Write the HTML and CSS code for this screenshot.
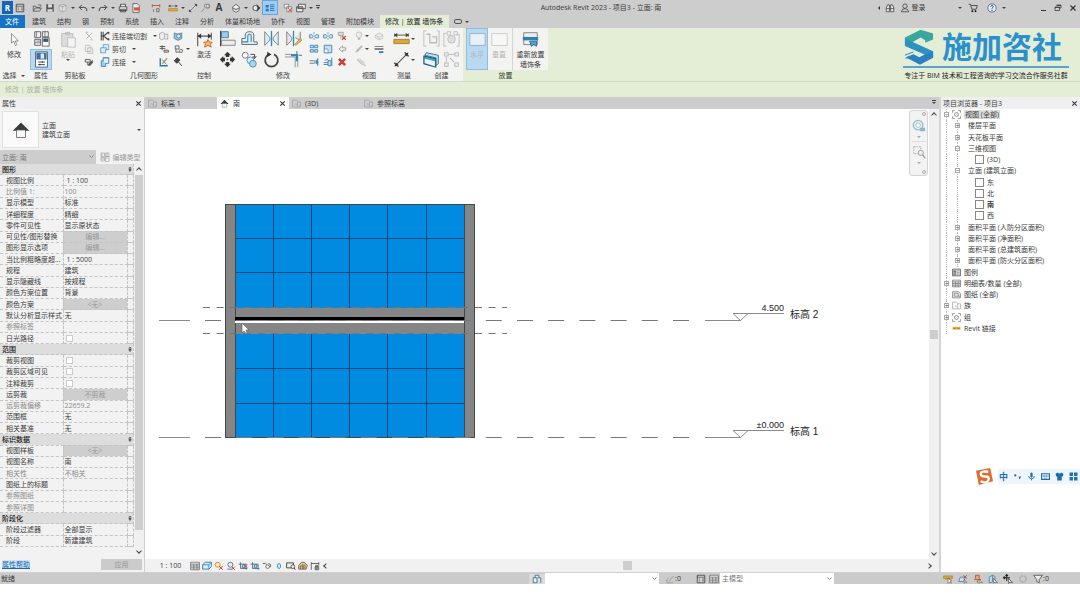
FILE: index.html
```html
<!DOCTYPE html>
<html lang="zh-CN">
<head>
<meta charset="utf-8">
<title>Autodesk Revit 2023 - 项目3 - 立面: 南</title>
<link rel="stylesheet" href="styles.css">
</head>
<body>
<svg class="sprite" aria-hidden="true">
  <symbol id="panel" viewBox="0 0 16 16"><path d="M2 2h12v12H2zM2 5h12M4 8h3M9 8h4M4 11h3M9 11h4" fill="#eee" stroke="#444" stroke-width="1.4"/></symbol>
  <symbol id="open" viewBox="0 0 16 16"><path d="M2 13V5h4l1 2h5v2M2 13l3-5h10l-3 5zM10 3h4v3" fill="none" stroke="#555" stroke-width="1.3"/></symbol>
  <symbol id="save" viewBox="0 0 16 16"><path d="M2 2h12v12H2z" fill="#555"/><path d="M5 2h6v5H5zM4 10h8v4H4z" fill="#ddd"/></symbol>
  <symbol id="sync" viewBox="0 0 16 16"><path d="M2 4l6-2 5 2v8l-6 2-5-2zM2 4l5 2 6-2M7 6v8" fill="#ddd" stroke="#999"/></symbol>
  <symbol id="undo" viewBox="0 0 16 16"><path d="M6 3L2 7l4 4M2 7h8q4 0 4 4v2" fill="none" stroke="#444" stroke-width="1.6"/></symbol>
  <symbol id="redo" viewBox="0 0 16 16"><path d="M10 3l4 4-4 4M14 7H6q-4 0-4 4v2" fill="none" stroke="#444" stroke-width="1.6"/></symbol>
  <symbol id="print" viewBox="0 0 16 16"><path d="M4 6V2h8v4M2 6h12v6H2zM4 10h8v4H4z" fill="#eee" stroke="#444" stroke-width="1.4"/></symbol>
  <symbol id="pdf" viewBox="0 0 16 16"><path d="M3 1h7l3 3v11H3z" fill="#eee" stroke="#555" stroke-width="1.3"/><path d="M5 7h9v5H5z" fill="#d9543f"/></symbol>
  <symbol id="dimred" viewBox="0 0 16 16"><path d="M2 2v5M14 2v5M2 4h12" stroke="#c65a45" fill="none" stroke-width="1.6"/><path d="M4 10v4M9 9v5h4V9z" stroke="#666" fill="none" stroke-width="1.3"/></symbol>
  <symbol id="measure" viewBox="0 0 20 16"><path d="M2 4h16M2 2v4M18 2v4M5 2L2 4l3 2M15 2l3 2-3 2" stroke="#444" fill="#444"/><path d="M1 9h18v5H1z" fill="#dca73c" stroke="#a87820"/></symbol>
  <symbol id="dimline" viewBox="0 0 16 16"><path d="M3 13L13 3M1 11l4 4M11 1l4 4" stroke="#555" stroke-width="1"/><path d="M1.500 14.500l1-4 3 3zM14.500 1.500l-1 4-3-3z" fill="#333"/></symbol>
  <symbol id="tag" viewBox="0 0 16 16"><path d="M1 14l4-5M6 2h7v6H8L5 6z" fill="#ddd" stroke="#777" stroke-width="1.2"/><circle cx="11" cy="5" r="3" fill="none" stroke="#777"/></symbol>
  <symbol id="home3d" viewBox="0 0 16 16"><path d="M2 7l6-5 6 5-6 4zM3 8v4l5 3 5-3V8" fill="#eee" stroke="#555" stroke-width="1.3"/></symbol>
  <symbol id="section" viewBox="0 0 16 16"><path d="M9 2l6 6-6 6z" fill="#333"/><circle cx="7" cy="8" r="4" fill="#eee" stroke="#444" stroke-width="1.4"/></symbol>
  <symbol id="lines" viewBox="0 0 16 16"><path d="M1 3h5v4H1zM1 9h5v4H1z" fill="#2b75b9"/><path d="M8 3h7M8 6h7M8 9h7M8 12h7" stroke="#2b75b9" stroke-width="1.5"/></symbol>
  <symbol id="closewin" viewBox="0 0 16 16"><path d="M2 2h7v6H2zM6 6h8v8H6z" fill="#eee" stroke="#666"/><path d="M8 8l6 6M14 8l-6 6" stroke="#d14c3c" stroke-width="1.6"/></symbol>
  <symbol id="switchwin" viewBox="0 0 16 16"><path d="M4 2h11v7H4zM1 6h10v8H1zM1 8h10" fill="#eee" stroke="#444" stroke-width="1.3"/></symbol>
  <symbol id="binoc" viewBox="0 0 16 16"><path d="M2 14V8l2-5h3v11zM9 14V3h3l2 5v6zM2 9h5M9 9h5" fill="#eee" stroke="#444" stroke-width="1.3"/></symbol>
  <symbol id="user" viewBox="0 0 16 16"><circle cx="8" cy="5" r="3.5" fill="none" stroke="#444" stroke-width="1.3"/><path d="M2 14q1-5 6-5t6 5z" fill="none" stroke="#444" stroke-width="1.3"/></symbol>
  <symbol id="cart" viewBox="0 0 16 16"><path d="M1 2h3l2 8h7l2-6H5" fill="none" stroke="#444" stroke-width="1.4"/><circle cx="7" cy="13" r="1.5"/><circle cx="12" cy="13" r="1.5"/></symbol>
  <symbol id="help" viewBox="0 0 16 16"><circle cx="8" cy="8" r="6.5" fill="#eaf2fa" stroke="#456" stroke-width="1.2"/><path d="M6 6q0-2 2-2t2 2q0 1-2 2v2M8 11v2" fill="none" stroke="#245a9a" stroke-width="1.5"/></symbol>
  <symbol id="restore" viewBox="0 0 16 16"><path d="M5 2h9v6h-3M2 6h9v7H2zM2 7h9M5 3h9" fill="none" stroke="#333" stroke-width="1.5"/></symbol>
  <symbol id="x" viewBox="0 0 16 16"><path d="M3 3l10 10M13 3L3 13" stroke="#333" stroke-width="2.4"/></symbol>
  <symbol id="cursor" viewBox="0 0 12 18"><path d="M2 1v13l3-3 2 6 2-1-2-5h4z" fill="#fff" stroke="#777"/></symbol>
  <symbol id="props" viewBox="0 0 20 20"><path d="M2 2h7v7H2zM11 2h7v6h-7zM2 11h7v7H2z" fill="#eee" stroke="#555"/><path d="M4 2v7M14 2v6M4 13h5M2 15h7" stroke="#777"/><path d="M11 9h8v10h-8z" fill="#fff" stroke="#555"/><path d="M12 10h6v4h-6z" fill="#345b80"/></symbol>
  <symbol id="sheet" viewBox="0 0 20 20"><path d="M3 1h14v18H3z" fill="#fff" stroke="#456"/><path d="M4 2h12v8H4z" fill="#416f9c"/><path d="M9 3h4v6H9z" fill="#dce9f5"/><path d="M6 13h8M11 12v2M6 16h8M8 15v2" stroke="#234" fill="none"/></symbol>
  <symbol id="paste" viewBox="0 0 20 20"><path d="M2 3h13v15H2z" fill="#ddd" stroke="#bbb"/><path d="M6 1h6v4H6z" fill="#c4c4c4"/><path d="M9 8h9v11H9z" fill="#f4f4f4" stroke="#bbb"/></symbol>
  <symbol id="cut" viewBox="0 0 16 16"><path d="M3 3l9 9M13 3l-9 9M3 2h4M10 14h4" stroke="#bbb" stroke-width="1.6"/></symbol>
  <symbol id="copyg" viewBox="0 0 16 16"><path d="M2 2h7l2 2v8H2zM6 6h6l2 2v7H6z" fill="#eee" stroke="#bbb" stroke-width="1.3"/></symbol>
  <symbol id="brush" viewBox="0 0 16 16"><path d="M2 4h8v4H2zM6 8v5h4l4-8" fill="none" stroke="#555" stroke-width="1.4"/><path d="M6 12l6-6 3 2-5 6z" fill="#555"/></symbol>
  <symbol id="cope" viewBox="0 0 16 16"><path d="M2 1v14M5 1v14M2 8h3M6 8l7-6M6 8l7 6M14 1v4M14 11v4" stroke="#444" stroke-width="1.7"/></symbol>
  <symbol id="cutgeo" viewBox="0 0 16 16"><path d="M5 1h9v8H9v5H1V6h4z" fill="#d9edfa" stroke="#397fab"/><path d="M5 6h5v4" fill="none" stroke="#397fab"/></symbol>
  <symbol id="joingeo" viewBox="0 0 16 16"><path d="M5 1h9v9h-5v5H2V6h3z" fill="#9fcdec" stroke="#276d9f" stroke-width="1.2"/><path d="M6 3h7v6H7z" fill="#e5f3fb"/></symbol>
  <symbol id="shape" viewBox="0 0 16 16"><path d="M1 4l5-2 3 2v8l-5 2-3-2zM9 5h5v8h-4" fill="#eee" stroke="#888"/></symbol>
  <symbol id="cubeb" viewBox="0 0 16 16"><path d="M2 3l6 2 6-2v9l-6 3-6-3z" fill="#8fc4e4" stroke="#35627c"/><circle cx="9" cy="8" r="3" fill="#e8f3f9" stroke="#35627c"/></symbol>
  <symbol id="beam" viewBox="0 0 16 16"><path d="M1 4h9M1 7h9M5 2v8M8 10h7v3H8z" fill="none" stroke="#555" stroke-width="1.5"/></symbol>
  <symbol id="wall" viewBox="0 0 16 16"><path d="M2 3h6v5H2zM3 8v5h10V9h-3" fill="#eee" stroke="#555" stroke-width="1.3"/><circle cx="11" cy="11" r="2.5" fill="#eee" stroke="#555"/></symbol>
  <symbol id="paint" viewBox="0 0 16 16"><path d="M2 2v12h12" fill="none" stroke="#2b75a9" stroke-width="2.2"/><path d="M5 11l8-9" stroke="#c79c3d" stroke-width="2.4"/><path d="M5 4l7 8" stroke="#4587b5" stroke-width="1.5"/></symbol>
  <symbol id="hammer" viewBox="0 0 16 16"><path d="M2 6l5-5 4 4-5 5zM8 7l6 7" fill="#444" stroke="#444" stroke-width="1.6"/></symbol>
  <symbol id="activate" viewBox="0 0 20 20"><path d="M2 2v16M18 2v8M2 6h16" stroke="#555" fill="none" stroke-width="1.3"/><path d="M2 6l4-3v6zM18 6l-4-3v6z" fill="#333"/><path d="M14 10l2 3 3 0-2 3 1 3-4-2-4 2 1-4-2-2h4z" fill="#f4b370" stroke="#bf6425"/></symbol>
  <symbol id="align" viewBox="0 0 20 20"><path d="M2 1v18" stroke="#333" stroke-width="1.4"/><path d="M3 2h8v7H3z" fill="#9bcdec" stroke="#39739a"/><path d="M3 12h16v6H3z" fill="#eee" stroke="#777"/></symbol>
  <symbol id="offset" viewBox="0 0 20 20"><path d="M1 17h18v-3h-4V6q0-4-5-4T5 6v4H1z" fill="#e3f1fa" stroke="#555"/><path d="M1 14h7V7q0-2 2-2t2 2v7" fill="none" stroke="#3688b9" stroke-width="1.3"/></symbol>
  <symbol id="mirror" viewBox="0 0 20 20"><path d="M2 2v16l6-6V9zM18 2v16l-6-6V9z" fill="#dceef7" stroke="#777"/><path d="M10 1v18" stroke="#368ac0" stroke-width="1.6"/></symbol>
  <symbol id="mirrorp" viewBox="0 0 20 20"><path d="M2 2v16l6-6V9zM18 2v10l-6-3" fill="#e4e4e4" stroke="#777"/><path d="M10 1v18" stroke="#368ac0" stroke-width="1.6"/><path d="M11 17l7-7 2 2-7 6z" fill="#e4b14b" stroke="#9a742b" stroke-width=".6"/></symbol>
  <symbol id="move" viewBox="0 0 20 20"><path d="M10 1l4 4h-2v3H8V5H6zM10 19l4-4h-2v-3H8v3H6zM1 10l4-4v2h3v4H5v2zM19 10l-4-4v2h-3v4h3v2z" fill="#333"/><path d="M7 7h6v6H7z" fill="#f3f3f2"/><path d="M9 9h2v2H9z" fill="#555"/></symbol>
  <symbol id="copy" viewBox="0 0 20 20"><circle cx="5" cy="5" r="3.5" fill="#fff" stroke="#666"/><circle cx="11" cy="11" r="4" fill="#dceef9" stroke="#4886ac"/><circle cx="14" cy="15" r="4" fill="#a9d6ef" stroke="#4886ac"/><path d="M11 4h5v4M14 6l2 3 2-3" fill="none" stroke="#333"/></symbol>
  <symbol id="rotate" viewBox="0 0 20 20"><path d="M13 4a7.500 7.500 0 1 1-6 0" fill="none" stroke="#444" stroke-width="2"/><path d="M5 1l5 3-5 3z" fill="#333"/></symbol>
  <symbol id="trim" viewBox="0 0 20 20"><path d="M0 7h12v12M0 4h15v15" fill="none" stroke="#888"/><path d="M7 5h7v7" fill="none" stroke="#2887c1" stroke-width="2.5"/><path d="M14 0v4M16 5h4" stroke="#555"/></symbol>
  <symbol id="split" viewBox="0 0 16 16"><path d="M1 6h4l2 2-2 3H1zM15 6h-4L9 8l2 3h4z" fill="#dceefa" stroke="#3a7ba8" stroke-width="1.3"/><path d="M8 2v3M8 11v3" stroke="#3a8bc0" stroke-width="1.3"/></symbol>
  <symbol id="array" viewBox="0 0 16 16"><path d="M2 2h5v4H2zM9 2h5v4H9zM2 9h5v4H2zM9 9h5v4H9z" fill="#b8dcf1" stroke="#3a82b2" stroke-width="1.3"/></symbol>
  <symbol id="scale" viewBox="0 0 16 16"><path d="M2 2h12v12H2z" fill="#c6e3f5" stroke="#3a82b2" stroke-width="1.4"/><path d="M2 8h6v6H2z" fill="#fff" stroke="#3a82b2"/></symbol>
  <symbol id="pin" viewBox="0 0 16 16"><path d="M2 2h8v5H2zM6 8v5" fill="#ddd" stroke="#888"/><path d="M8 8l6 6M14 8l-6 6" stroke="#c5463d" stroke-width="1.7"/></symbol>
  <symbol id="unpin" viewBox="0 0 16 16"><path d="M14 6h-5V3L3 8l6 5v-3h5z" fill="#eee" stroke="#999" stroke-width="1.3"/></symbol>
  <symbol id="trims" viewBox="0 0 16 16"><path d="M1 6h8M1 10h8" stroke="#666" stroke-width="1.3"/><path d="M8 8h6M11 5l3 3-3 3M14 2v12" fill="none" stroke="#3185ba" stroke-width="1.7"/></symbol>
  <symbol id="trimm" viewBox="0 0 16 16"><path d="M1 9h7M1 12h7" stroke="#666" stroke-width="1.3"/><path d="M8 6h5v8H8zM14 1v13M3 6l3-3 3 3" fill="#cbe5f5" stroke="#3185ba" stroke-width="1.5"/></symbol>
  <symbol id="del" viewBox="0 0 16 16"><path d="M3 3l10 10M13 3L3 13" stroke="#c94137" stroke-width="4"/></symbol>
  <symbol id="bulb" viewBox="0 0 16 16"><circle cx="8" cy="6" r="4.500" fill="#eee" stroke="#bbb" stroke-width="1.3"/><path d="M6 11h4v3H6z" fill="#bbb"/></symbol>
  <symbol id="layers" viewBox="0 0 16 16"><path d="M2 7l6-4 6 3v6l-6 2-6-3zM2 7l6 3 6-4M8 10v4" fill="#e8e8e8" stroke="#bbb"/></symbol>
  <symbol id="linework" viewBox="0 0 16 16"><path d="M1 3l9 6 4 5-6-2-7-6zM1 6l7 5M4 3l8 6" fill="#ddd" stroke="#bbb"/></symbol>
  <symbol id="pen" viewBox="0 0 16 16"><path d="M2 14l2-5 8-7 2 2-7 8z" fill="#bbb"/></symbol>
  <symbol id="lw" viewBox="0 0 16 16"><path d="M1 4h14" stroke="#444"/><path d="M1 8h14" stroke="#444" stroke-width="2"/><path d="M8 13h7" stroke="#2d81b7" stroke-width="3"/></symbol>
  <symbol id="group" viewBox="0 0 20 20"><path d="M4 1H1v18h3M16 1h3v18h-3" fill="none" stroke="#bbb"/><path d="M4 5h4v10h8V8h-5" fill="none" stroke="#bbb" stroke-width="1.5"/></symbol>
  <symbol id="groupc" viewBox="0 0 20 20"><path d="M4 4H1v15h3M16 5h3v14h-3" fill="none" stroke="#bbb"/><circle cx="10" cy="11" r="4.500" fill="#ddd" stroke="#bbb"/><path d="M5 2h4v4H5zM13 2h4v4h-4z" fill="none" stroke="#bbb"/></symbol>
  <symbol id="assembly" viewBox="0 0 20 20"><path d="M4 2l14 3v10l-3 2V8L2 5z" fill="#bfe0f2" stroke="#286686"/><path d="M1 6l14 3v10L1 15z" fill="#4b9fcb" stroke="#1f566f" stroke-width="1.2"/><path d="M2 9l12 3v6L2 14z" fill="#eaf6fc"/></symbol>
  <symbol id="parts" viewBox="0 0 20 20"><path d="M2 2h4v4H2zM14 2h4v4h-4zM2 14h4v4H2zM14 14h4v4h-4zM7 4h6M4 7v6M8 8l5 5" fill="none" stroke="#bbb" stroke-width="1.2"/></symbol>
  <symbol id="rect" viewBox="0 0 20 16"><path d="M1 1h18v14H1z" fill="#e9f1f8" stroke="#8eabc5"/></symbol>
  <symbol id="rectg" viewBox="0 0 20 16"><path d="M1 1h18v14H1z" fill="#f8f8f8" stroke="#c6c6c6"/></symbol>
  <symbol id="sweep" viewBox="0 0 20 18"><path d="M2 1h16v14H2z" fill="#eee" stroke="#777"/><path d="M1 6h18v4H1z" fill="#327fb0"/><path d="M9 11h8v6l-3-2-3 2z" fill="#4da5d8" stroke="#25658d"/></symbol>
  <symbol id="home" viewBox="0 0 24 24"><path d="M1 13L12 2l11 11z" fill="#343c42"/><path d="M6 12h12v10H6z" fill="#f7f7f7" stroke="#555"/></symbol>
  <symbol id="plan" viewBox="0 0 16 16"><path d="M1 2h7l2 2v4M1 2v12h14V5h-5M5 9h5v5" fill="none" stroke="#999" stroke-width="1.2"/></symbol>
  <symbol id="edit" viewBox="0 0 20 20"><path d="M2 2h7v7H2zM11 2h7v7h-7zM2 11h7v7H2zM11 9h7v10h-7zM4 2v7M14 2v12M2 14h7" fill="none" stroke="#999" stroke-width="1.2"/></symbol>
  <symbol id="views" viewBox="0 0 16 16"><path d="M1 5V1h4M11 1h4v4M15 11v4h-4M5 15H1v-4" fill="none" stroke="#777" stroke-width="1.3"/><circle cx="8" cy="8" r="3.500" fill="#eee" stroke="#777" stroke-width="1.3"/></symbol>
  <symbol id="legend" viewBox="0 0 16 16"><path d="M1 2h14v12H1z" fill="#ddd" stroke="#555" stroke-width="1.4"/><path d="M3 5h4v3H3zM3 10h4v2H3zM9 5h4M9 8h4M9 11h4" fill="#777" stroke="#777"/></symbol>
  <symbol id="sched" viewBox="0 0 16 16"><path d="M1 2h14v12H1zM1 5h14M1 8h14M1 11h14M6 5v9M11 5v9" fill="#f4f4f4" stroke="#666" stroke-width="1.2"/></symbol>
  <symbol id="sheets" viewBox="0 0 16 16"><path d="M1 3h11l3 3v8H1zM4 6h7v5H4zM11 11h4" fill="#eee" stroke="#777" stroke-width="1.3"/></symbol>
  <symbol id="link" viewBox="0 0 16 16"><path d="M1 5h14v5H1z" fill="#e0ac37"/><path d="M3 8h3M10 8h3" stroke="#8a6d20" stroke-width="1.4"/></symbol>
  <symbol id="cube" viewBox="0 0 16 16"><path d="M1 6l4-4h10v7l-4 4H1z" fill="#d8edf8" stroke="#3580ae" stroke-width="1.5"/><path d="M1 6h10v7M11 6l4-4" fill="none" stroke="#3580ae" stroke-width="1.3"/></symbol>
  <symbol id="sun" viewBox="0 0 16 16"><circle cx="6" cy="6" r="4" fill="#fbe7bd" stroke="#d1902b" stroke-width="1.5"/><path d="M8 8l6 6M14 8l-6 6" stroke="#bd4936" stroke-width="1.6"/></symbol>
  <symbol id="shadow" viewBox="0 0 16 16"><circle cx="7" cy="6" r="4" fill="#eee" stroke="#557b94" stroke-width="1.5"/><path d="M2 13h8" stroke="#557b94" stroke-width="1.5"/><path d="M9 9l5 5M14 9l-5 5" stroke="#bd4936" stroke-width="1.5"/></symbol>
  <symbol id="crop" viewBox="0 0 16 16"><path d="M1 5h12v9M4 2v10h11M7 6h4v5H7z" fill="#bcdcf0" stroke="#466c88" stroke-width="1.3"/></symbol>
  <symbol id="cropx" viewBox="0 0 16 16"><path d="M1 5h12v9M4 2v10h11M7 6h4v5H7z" fill="#bcdcf0" stroke="#466c88" stroke-width="1.3"/><path d="M9 5l6 6M15 5l-6 6" stroke="#bd4936" stroke-width="1.4"/></symbol>
  <symbol id="glasses" viewBox="0 0 16 16"><path d="M1 4q5-2 8 3M6 9h8q1-5-4-5" fill="none" stroke="#666" stroke-width="1.5"/><circle cx="9" cy="9" r="3" fill="#eee" stroke="#666" stroke-width="1.2"/></symbol>
  <symbol id="reveal" viewBox="0 0 16 16"><ellipse cx="8" cy="8" rx="2.500" ry="4" fill="#e2f2fb" stroke="#378bbd" stroke-width="1.5"/></symbol>
  <symbol id="temp" viewBox="0 0 16 16"><path d="M1 3h11v8H1z" fill="#eee" stroke="#444" stroke-width="1.5"/><circle cx="11" cy="9" r="3" fill="#eee" stroke="#444" stroke-width="1.3"/><path d="M13 11l2 3" stroke="#444" stroke-width="1.5"/></symbol>
  <symbol id="displace" viewBox="0 0 16 16"><path d="M1 13V7l5-5h4l5 5-2 6z" fill="#d8c397" stroke="#735c3e" stroke-width="1.3"/><path d="M4 13V8h4v5M8 5v8M11 6v6" fill="none" stroke="#735c3e" stroke-width="1.2"/></symbol>
  <symbol id="constr" viewBox="0 0 16 16"><path d="M2 2v12M2 4h12M14 2v5" fill="none" stroke="#555" stroke-width="1.4"/><path d="M8 9h6v5H8zM9 9V7h4v2" fill="#888" stroke="#555"/></symbol>
  <symbol id="funnel" viewBox="0 0 16 16"><path d="M1 2h14L10 9v5l-4-2V9z" fill="#eee" stroke="#555" stroke-width="1.4"/></symbol>
  <symbol id="worksets" viewBox="0 0 16 16"><path d="M2 6h6v8H2zM5 6V2h6v3M9 6h5v8" fill="#e6f3f8" stroke="#38738c" stroke-width="1.4"/></symbol>
  <symbol id="sellink" viewBox="0 0 16 16"><path d="M1 3h14v4H1zM3 8h9" fill="#d8a43c" stroke="#a57b25"/><path d="M8 7v8l2-2 3 2-1-4h2z" fill="#fff" stroke="#555"/></symbol>
  <symbol id="selund" viewBox="0 0 16 16"><path d="M1 12l3-7h8l-3 7z" fill="#cce2f1" stroke="#3f7aa0" stroke-width="1.2"/><path d="M9 2l5 5M14 2L9 7" stroke="#c1473a" stroke-width="1.6"/><path d="M10 8v7l2-2 2 1z" fill="#fff" stroke="#555"/></symbol>
  <symbol id="selpin" viewBox="0 0 16 16"><path d="M4 2h6v5l2 2H2l2-2zM7 9v5" fill="#f0a173" stroke="#b9532b" stroke-width="1.3"/><path d="M10 8v7l2-2 3 1z" fill="#fff" stroke="#555"/></symbol>
  <symbol id="selface" viewBox="0 0 16 16"><path d="M2 5l5-3v11l-5 1zM7 2l4 2v7" fill="#c7e4f4" stroke="#347ba5" stroke-width="1.3"/><path d="M9 7v8l2-2 4 1z" fill="#fff" stroke="#444"/></symbol>
  <symbol id="drag" viewBox="0 0 16 16"><path d="M6 1v10M1 6h10M4 3l2-2 2 2M3 4L1 6l2 2" fill="none" stroke="#222" stroke-width="1.8"/><path d="M9 7v8l2-2 4 1z" fill="#fff" stroke="#222"/></symbol>
  <symbol id="ring" viewBox="0 0 16 16"><circle cx="8" cy="8" r="5" fill="none" stroke="#aaa" stroke-width="2.500" stroke-dasharray="3 1"/></symbol>
  <symbol id="editreq" viewBox="0 0 16 16"><path d="M3 14V9l3-3M3 14h10M6 12l8-9" fill="none" stroke="#999" stroke-width="1.3"/></symbol>
</svg>

<header class="titlebar">
  <nav class="quick" aria-label="快速访问工具栏">
    <button class="app" aria-label="应用菜单">R</button>
    <button aria-label="主页"><svg><use href="#panel"/></svg></button><i class="sep"></i>
    <button aria-label="打开"><svg><use href="#open"/></svg></button>
    <button aria-label="保存"><svg><use href="#save"/></svg></button>
    <button aria-label="同步"><svg><use href="#sync"/></svg></button><b class="caret"></b>
    <button aria-label="放弃"><svg><use href="#undo"/></svg></button><b class="caret"></b>
    <button aria-label="重做"><svg><use href="#redo"/></svg></button><b class="caret"></b>
    <button aria-label="打印"><svg><use href="#print"/></svg></button>
    <button aria-label="导出 PDF"><svg><use href="#pdf"/></svg></button><i class="sep far"></i>
    <button aria-label="关闭非活动"><svg><use href="#dimred"/></svg></button><i class="sep"></i>
    <button aria-label="测量"><svg><use href="#measure"/></svg></button><b class="caret"></b>
    <button aria-label="对齐尺寸标注"><svg><use href="#dimline"/></svg></button>
    <button aria-label="按类别标记"><svg><use href="#tag"/></svg></button>
    <button class="letter" aria-label="文字">A</button><i class="sep"></i>
    <button aria-label="默认三维视图"><svg><use href="#home3d"/></svg></button><b class="caret"></b>
    <button aria-label="剖面"><svg><use href="#section"/></svg></button>
    <button class="on" aria-label="细线"><svg><use href="#lines"/></svg></button><i class="sep"></i>
    <button aria-label="关闭隐藏窗口"><svg><use href="#closewin"/></svg></button>
    <button aria-label="切换窗口"><svg><use href="#switchwin"/></svg></button><b class="caret"></b>
    <b class="caret bar"></b>
  </nav>
  <h1 class="title">Autodesk Revit 2023 - 项目3 - 立面: 南</h1>
  <div class="account">
    <b class="caret side"></b>
    <button aria-label="搜索"><svg><use href="#binoc"/></svg></button>
    <button class="login"><svg><use href="#user"/></svg>登录</button>
    <span class="store"><b class="caret"></b>
    <button aria-label="商店"><svg><use href="#cart"/></svg></button></span>
    <button aria-label="帮助"><svg><use href="#help"/></svg></button><b class="caret"></b>
  </div>
  <div class="winctl">
    <button aria-label="最小化"><i class="min"></i></button>
    <button aria-label="还原"><svg><use href="#restore"/></svg></button>
    <button aria-label="关闭"><svg><use href="#x"/></svg></button>
  </div>
</header>

<nav class="tabs" aria-label="功能区选项卡">
  <button class="file">文件</button>
  <button>建筑</button><button>结构</button><button>钢</button><button>预制</button><button>系统</button><button>插入</button><button>注释</button><button>分析</button><button>体量和场地</button><button>协作</button><button>视图</button><button>管理</button><button>附加模块</button>
  <button class="current">修改 | 放置 墙饰条</button>
  <button class="state" aria-label="面板状态"><i></i><b class="caret"></b></button>
</nav>

<section class="ribbon" aria-label="功能区">
  <div class="group p-select">
    <div class="body"><button class="tool"><svg class="cur"><use href="#cursor"/></svg><span>修改</span></button></div>
    <h2>选择 <b class="caret"></b></h2>
  </div>
  <div class="group p-props">
    <div class="body stack"><button aria-label="类型属性"><svg class="big"><use href="#props"/></svg></button><button class="hot" aria-label="属性"><svg class="big"><use href="#sheet"/></svg></button></div>
    <h2>属性</h2>
  </div>
  <div class="group p-clip">
    <div class="body split">
      <button class="tool dim"><svg class="big"><use href="#paste"/></svg><span>粘贴</span><b class="caret"></b></button>
      <div class="rows"><button aria-label="剪切"><svg><use href="#cut"/></svg></button><button aria-label="复制"><svg><use href="#copyg"/></svg></button><button aria-label="匹配类型"><svg><use href="#brush"/></svg></button></div>
    </div>
    <h2>剪贴板</h2>
  </div>
  <div class="group p-geo">
    <div class="body split">
      <div class="rows named"><button><svg><use href="#cope"/></svg>连接端切割<b class="caret"></b></button><button><svg><use href="#cutgeo"/></svg>剪切<b class="caret"></b></button><button><svg><use href="#joingeo"/></svg>连接<b class="caret"></b></button></div>
      <div class="pairs"><button aria-label="拆分面"><svg><use href="#shape"/></svg></button><button aria-label="填色"><svg><use href="#cubeb"/></svg></button><button aria-label="梁连接"><svg><use href="#beam"/></svg></button><button class="drop" aria-label="墙连接"><svg><use href="#wall"/></svg><b class="caret"></b></button><button aria-label="涂料"><svg><use href="#paint"/></svg></button><button aria-label="拆除"><svg><use href="#hammer"/></svg></button></div>
    </div>
    <h2>几何图形</h2>
  </div>
  <div class="group p-ctl">
    <div class="body"><button class="tool"><svg class="big"><use href="#activate"/></svg><span>激活</span></button></div>
    <h2>控制</h2>
  </div>
  <div class="group p-mod">
    <div class="body split">
      <div class="bigs"><button aria-label="对齐"><svg class="big"><use href="#align"/></svg></button><button aria-label="偏移"><svg class="big"><use href="#offset"/></svg></button><button aria-label="镜像-拾取轴"><svg class="big"><use href="#mirror"/></svg></button><button aria-label="镜像-绘制轴"><svg class="big"><use href="#mirrorp"/></svg></button><button aria-label="移动"><svg class="big"><use href="#move"/></svg></button><button aria-label="复制图元"><svg class="big"><use href="#copy"/></svg></button><button aria-label="旋转"><svg class="big"><use href="#rotate"/></svg></button><button aria-label="修剪"><svg class="big"><use href="#trim"/></svg></button></div>
      <div class="pairs three"><button aria-label="拆分图元"><svg><use href="#split"/></svg></button><button aria-label="用间隙拆分"><svg><use href="#split"/></svg></button><button aria-label="解锁"><svg><use href="#pin"/></svg></button><button aria-label="阵列"><svg><use href="#array"/></svg></button><button aria-label="缩放"><svg><use href="#scale"/></svg></button><button aria-label="锁定"><svg><use href="#unpin"/></svg></button><button aria-label="修剪单个"><svg><use href="#trims"/></svg></button><button aria-label="修剪多个"><svg><use href="#trimm"/></svg></button><button aria-label="删除"><svg><use href="#del"/></svg></button></div>
    </div>
    <h2>修改</h2>
  </div>
  <div class="group p-view">
    <div class="body"><div class="pairs wide"><button aria-label="隐藏"><svg><use href="#bulb"/></svg><b class="caret"></b></button><button aria-label="置换"><svg><use href="#layers"/></svg></button><button aria-label="替换图形"><svg><use href="#pen"/></svg><b class="caret"></b></button><button aria-label="线宽"><svg><use href="#lw"/></svg></button><button aria-label="线处理"><svg><use href="#linework"/></svg></button></div></div>
    <h2>视图</h2>
  </div>
  <div class="group p-meas">
    <div class="body stack"><button aria-label="测量距离"><svg class="big"><use href="#measure"/></svg><b class="caret"></b></button><button aria-label="尺寸标注"><svg class="big"><use href="#dimline"/></svg><b class="caret"></b></button></div>
    <h2>测量</h2>
  </div>
  <div class="group p-make">
    <div class="body"><div class="bigs two"><button aria-label="创建组"><svg class="big"><use href="#group"/></svg></button><button aria-label="创建相似"><svg class="big"><use href="#groupc"/></svg></button><button aria-label="创建部件"><svg class="big"><use href="#assembly"/></svg></button><button aria-label="创建零件"><svg class="big"><use href="#parts"/></svg></button></div></div>
    <h2>创建</h2>
  </div>
  <div class="group p-place">
    <div class="body split">
      <button class="tool hot dim"><svg class="big"><use href="#rect"/></svg><span>水平</span></button>
      <button class="tool dim"><svg class="big"><use href="#rectg"/></svg><span>垂直</span></button>
      <button class="tool last"><svg class="big"><use href="#sweep"/></svg><span>重新放置</span><span>墙饰条</span></button>
    </div>
    <h2>放置</h2>
  </div>
  <aside class="brand">
    <div class="brand-top">
      <svg class="brand-mark" viewBox="0 0 90 110" aria-hidden="true"><path d="M88 14L50 2 2 26v24l24 12V40l24-14 14 8v8l24-10z" fill="#3aa79f"/><path d="M2 28l24 12 62 28v20l-26-10L2 52z" fill="#2b93bd"/><path d="M88 68v20l-40 21L4 86l24-9 18 9 18-9z" fill="#2a80c4"/><path d="M2 80l26-10M4 90l26-10" stroke="#2a80c4" stroke-width="3"/></svg>
      <strong>施加咨社</strong>
    </div>
    <p>专注于 BIM 技术和工程咨询的学习交流合作服务社群</p>
  </aside>
</section>

<div class="options">修改 | 放置 墙饰条</div>

<main class="work">
  <aside class="properties" aria-label="属性">
    <header class="panelhead"><h2>属性</h2><button aria-label="关闭属性"><svg><use href="#x"/></svg></button></header>
    <div class="type"><span class="thumb"><svg><use href="#home"/></svg></span><span class="names">立面<br>建筑立面</span><b class="caret"></b></div>
    <div class="instance"><select aria-label="实例"><option>立面: 南</option></select><button><svg><use href="#edit"/></svg>编辑类型</button></div>
    <div class="tablewrap">
      <table>
        <colgroup><col class="c1"><col class="c2"><col class="c3"></colgroup>
        <tbody>
        <tr class="cat"><th colspan="2">图形</th><td>⇞</td></tr>
        <tr><th>视图比例</th><td class="in">1 : 100</td><td></td></tr>
        <tr class="off"><th>比例值 1:</th><td>100</td><td></td></tr>
        <tr><th>显示模型</th><td>标准</td><td></td></tr>
        <tr><th>详细程度</th><td>精细</td><td></td></tr>
        <tr><th>零件可见性</th><td>显示原状态</td><td></td></tr>
        <tr><th>可见性/图形替换</th><td class="act"><button>编辑...</button></td><td></td></tr>
        <tr><th>图形显示选项</th><td class="act"><button>编辑...</button></td><td></td></tr>
        <tr><th>当比例粗略度超...</th><td class="in">1 : 5000</td><td></td></tr>
        <tr><th>规程</th><td>建筑</td><td></td></tr>
        <tr><th>显示隐藏线</th><td>按规程</td><td></td></tr>
        <tr><th>颜色方案位置</th><td>背景</td><td></td></tr>
        <tr><th>颜色方案</th><td class="act"><button>&lt;无&gt;</button></td><td></td></tr>
        <tr><th>默认分析显示样式</th><td>无</td><td></td></tr>
        <tr class="off"><th>参照标签</th><td></td><td></td></tr>
        <tr><th><label for="sun1">日光路径</label></th><td><input type="checkbox" id="sun1"></td><td></td></tr>
        <tr class="cat"><th colspan="2">范围</th><td>⇞</td></tr>
        <tr><th><label for="crop1">裁剪视图</label></th><td><input type="checkbox" id="crop1"></td><td></td></tr>
        <tr><th><label for="crop2">裁剪区域可见</label></th><td><input type="checkbox" id="crop2"></td><td></td></tr>
        <tr><th><label for="crop3">注释裁剪</label></th><td><input type="checkbox" id="crop3"></td><td></td></tr>
        <tr><th>远剪裁</th><td class="act"><button>不剪裁</button></td><td></td></tr>
        <tr class="off"><th>远剪裁偏移</th><td>22659.2</td><td></td></tr>
        <tr><th>范围框</th><td>无</td><td></td></tr>
        <tr><th>相关基准</th><td>无</td><td></td></tr>
        <tr class="cat"><th colspan="2">标识数据</th><td>⇞</td></tr>
        <tr><th>视图样板</th><td class="act"><button>&lt;无&gt;</button></td><td></td></tr>
        <tr><th>视图名称</th><td>南</td><td></td></tr>
        <tr class="off"><th>相关性</th><td>不相关</td><td></td></tr>
        <tr><th>图纸上的标题</th><td></td><td></td></tr>
        <tr class="off"><th>参照图纸</th><td></td><td></td></tr>
        <tr class="off"><th>参照详图</th><td></td><td></td></tr>
        <tr class="cat"><th colspan="2">阶段化</th><td>⇞</td></tr>
        <tr><th>阶段过滤器</th><td>全部显示</td><td></td></tr>
        <tr><th>阶段</th><td>新建建筑</td><td></td></tr>
        </tbody>
      </table>
      <div class="vscroll"><i class="chev up"></i><span class="bar"></span><i class="chev down"></i></div>
    </div>
    <footer><a href="#help">属性帮助</a><button disabled>应用</button></footer>
  </aside>

  <section class="viewer" aria-label="视图窗口">
    <nav class="doctabs">
      <button><svg><use href="#plan"/></svg><span>标高 1</span></button>
      <button class="current"><svg><use href="#home"/></svg><span>南</span><svg class="close"><use href="#x"/></svg></button>
      <button><svg><use href="#plan"/></svg><span>(3D)</span></button>
      <button><svg><use href="#plan"/></svg><span>参照标高</span></button>
      <b class="caret bar"></b>
    </nav>
    <div class="stage">
      <svg class="drawing" viewBox="145 109 784 450" preserveAspectRatio="xMinYMin meet" role="img" aria-label="南立面">
        <rect x="225" y="204" width="250" height="234" fill="#858585"/>
        <path d="M235 204h229v104H235zM235 334h229v104H235z" fill="#008ae0"/>
        <path d="M273.500 204v104M311.500 204v104M349.500 204v104M387.500 204v104M426.500 204v104M273.500 334v104M311.500 334v104M349.500 334v104M387.500 334v104M426.500 334v104M235 238.500h229M235 272.500h229M235 368.500h229M235 403.500h229" stroke="#0c477b"/>
        <path d="M225.500 204.500h249v233h-249zM235.500 204v234M464.500 204v234" fill="none" stroke="#3f484d"/>
        <rect x="235" y="321" width="229" height="2" fill="#fff"/><rect x="235" y="317" width="229" height="3" fill="#000"/>
        <path d="M203 307.500h304M203 333.500h304" stroke="#6c7878" stroke-dasharray="7 6.600"/>
        <path d="M159 320.500h31M159 437.500h31M705 320.500h36M705 437.500h36M733 313.500h51M733 313.500l7.500 7 7.500-7M733 430.500h51M733 430.500l7.500 7 7.500-7" fill="none" stroke="#8b8b8b"/>
        <path d="M205 320.500h496M205 437.500h496" stroke="#777" stroke-dasharray="16 15.200"/>
        <g class="leveltext"><text x="784" y="311" text-anchor="end">4.500</text><text x="784" y="428" text-anchor="end">±0.000</text><text class="name" x="790" y="318">标高 2</text><text class="name" x="790" y="435">标高 1</text></g>
        <path d="M242 323v10l2-2 2 3 1-1-1-3h3z" fill="#fff" stroke="#555" stroke-width=".6"/>
      </svg>
      <div class="navbar">
        <i class="dot"></i>
        <button aria-label="控制盘"><svg viewBox="0 0 16 16"><circle cx="7" cy="7" r="5.500" fill="#e4eff4" stroke="#9dbccb" stroke-width="1.500"/><circle cx="7" cy="7" r="2.500" fill="#fff" stroke="#9dbccb"/><path d="M9 10h6v4H9z" fill="#8fb6ca"/></svg></button><b class="caret"></b>
        <hr>
        <button aria-label="区域放大"><svg viewBox="0 0 16 16"><path d="M2 2h8v8H2z" fill="none" stroke="#aaa" stroke-dasharray="2 1"/><circle cx="10" cy="9" r="3" fill="#eee" stroke="#999"/><path d="M12 11l3 4" stroke="#999" stroke-width="1.500"/></svg></button><b class="caret"></b>
        <i class="dot end"></i>
      </div>
      <div class="vscroll view"><i class="chev up"></i><span class="bar"></span><i class="chev down"></i></div>
    </div>
    <div class="viewbar">
      <button class="ratio">1 : 100</button>
      <button aria-label="详细程度"><svg><use href="#sched"/></svg></button><button aria-label="视觉样式"><svg><use href="#cube"/></svg></button><button aria-label="日光路径"><svg><use href="#sun"/></svg></button><button aria-label="阴影"><svg><use href="#shadow"/></svg></button><button aria-label="裁剪视图"><svg><use href="#cropx"/></svg></button><button aria-label="显示裁剪区域"><svg><use href="#crop"/></svg></button><button aria-label="临时隐藏"><svg><use href="#glasses"/></svg></button><button aria-label="显示隐藏图元"><svg><use href="#reveal"/></svg></button><button aria-label="临时视图属性"><svg><use href="#temp"/></svg></button><button aria-label="分析模型"><svg><use href="#displace"/></svg></button><button aria-label="显示约束"><svg><use href="#constr"/></svg></button>
      <i class="chev left"></i>
      <div class="hscroll"><span></span></div>
      <i class="chev right"></i>
    </div>
  </section>

  <aside class="browser" aria-label="项目浏览器">
    <header class="panelhead"><h2>项目浏览器 - 项目3</h2><button aria-label="关闭项目浏览器"><svg><use href="#x"/></svg></button></header>
    <ul class="tree">
      <li class="l0"><i class="exp">−</i><svg><use href="#views"/></svg><span class="sel">视图 (全部)</span></li>
      <li class="l1"><i class="exp">+</i><span>楼层平面</span></li>
      <li class="l1"><i class="exp">+</i><span>天花板平面</span></li>
      <li class="l1"><i class="exp">−</i><span>三维视图</span></li>
      <li class="l2"><i class="box"></i><span>(3D)</span></li>
      <li class="l1"><i class="exp">−</i><span>立面 (建筑立面)</span></li>
      <li class="l2"><i class="box"></i><span>东</span></li>
      <li class="l2"><i class="box"></i><span>北</span></li>
      <li class="l2"><i class="box"></i><strong>南</strong></li>
      <li class="l2"><i class="box"></i><span>西</span></li>
      <li class="l1"><i class="exp">+</i><span>面积平面 (人防分区面积)</span></li>
      <li class="l1"><i class="exp">+</i><span>面积平面 (净面积)</span></li>
      <li class="l1"><i class="exp">+</i><span>面积平面 (总建筑面积)</span></li>
      <li class="l1"><i class="exp">+</i><span>面积平面 (防火分区面积)</span></li>
      <li class="l0"><i class="exp none"></i><svg><use href="#legend"/></svg><span>图例</span></li>
      <li class="l0"><i class="exp">+</i><svg><use href="#sched"/></svg><span>明细表/数量 (全部)</span></li>
      <li class="l0"><i class="exp none"></i><svg><use href="#sheets"/></svg><span>图纸 (全部)</span></li>
      <li class="l0"><i class="exp">+</i><svg><use href="#plan"/></svg><span>族</span></li>
      <li class="l0"><i class="exp">+</i><svg><use href="#views"/></svg><span>组</span></li>
      <li class="l0"><i class="exp none"></i><svg><use href="#link"/></svg><span>Revit 链接</span></li>
    </ul>
  </aside>
</main>

<footer class="status">
  <span class="ready">就绪</span>
  <button class="ws" aria-label="工作集"><svg><use href="#worksets"/></svg></button>
  <select aria-label="活动工作集"><option></option></select>
  <button class="req"><svg><use href="#editreq"/></svg>:0</button>
  <button aria-label="设计选项"><svg><use href="#panel"/></svg></button>
  <button aria-label="排除选项"><svg><use href="#sched"/></svg></button>
  <select aria-label="设计选项"><option>主模型</option></select>
  <div class="picks"><button aria-label="选择链接"><svg><use href="#sellink"/></svg></button><button aria-label="选择基线图元"><svg><use href="#selund"/></svg></button><button aria-label="选择锁定图元"><svg><use href="#selpin"/></svg></button><button aria-label="按面选择"><svg><use href="#selface"/></svg></button><button aria-label="选择时拖曳"><svg><use href="#drag"/></svg></button><button aria-label="后台进程"><svg><use href="#ring"/></svg></button><button class="req"><svg><use href="#funnel"/></svg>:0</button></div>
</footer>

<div class="ime" aria-label="输入法">
  <svg class="sogou" viewBox="0 0 20 20"><path d="M1 4l15-3 3 14-15 4z" fill="#df6c33"/><path d="M14 5q-8-1-8 2t5 3 3 4-8 1" fill="none" stroke="#fff" stroke-width="2.400"/></svg>
  <span>中</span>
  <svg viewBox="0 0 16 16"><circle cx="4" cy="6" r="2" fill="#1d6db0"/><path d="M10 8h4q0 4-3 5" fill="#1d6db0"/></svg>
  <svg viewBox="0 0 16 16"><rect x="6" y="1" width="4" height="9" rx="2" fill="#1d6db0"/><path d="M3 7q0 5 5 5t5-5M8 12v3" fill="none" stroke="#1d6db0" stroke-width="1.500"/></svg>
  <svg viewBox="0 0 16 16"><path d="M1 3h14v10H1z" fill="none" stroke="#1d6db0" stroke-width="2"/><path d="M3 6h10M3 8h10M5 11h6" stroke="#1d6db0" stroke-width="1.300" stroke-dasharray="2 1"/></svg>
  <svg viewBox="0 0 16 16"><path d="M1 3l4-2q3 3 6 0l4 2-1 5h-2v7H4V8H2z" fill="#1d6db0"/></svg>
  <svg viewBox="0 0 16 16"><path d="M1 1h6v6H1zM9 1h6v6H9zM1 9h6v6H1zM9 9h6v6H9z" fill="#1d6db0"/></svg>
</div>
</body>
</html>
```
FILE: styles.css
```css
* { box-sizing: border-box; }

body {
  margin: 0;
  min-height: 100vh;
  padding-bottom: 24px;
  display: flex;
  flex-direction: column;
  background: #fff;
  color: #3a3a3a;
  font: 7px/9px "Open Sans", "Noto Sans CJK SC", sans-serif;
}

h1, h2, p, ul { margin: 0; padding: 0; font-size: 7px; font-weight: 400; }
ul { list-style: none; }
svg { display: block; width: 10px; height: 10px; flex: none; }
.sprite { position: absolute; width: 0; height: 0; }

button, select {
  margin: 0;
  padding: 0;
  border: 0;
  background: none;
  color: inherit;
  font: inherit;
  white-space: nowrap;
}
button { display: flex; align-items: center; justify-content: center; }
select { appearance: none; border-radius: 0; }
input[type="checkbox"] {
  appearance: none;
  display: block;
  width: 7px;
  height: 7px;
  margin: 0 1px;
  border: 1px solid #ccc;
  background: #fff;
}

.caret {
  flex: none;
  width: 0;
  height: 0;
  margin: 0 1px;
  border: 2px solid transparent;
  border-top-color: #444;
  border-bottom-width: 0;
}
.caret.side { border: 2px solid transparent; border-right-color: #333; border-left-width: 0; }
.caret.bar { position: relative; }
.caret.bar::before { content: ""; position: absolute; left: -2px; top: -4px; width: 4px; height: 1px; background: #444; }

.chev { flex: none; width: 4px; height: 4px; border: solid #444; border-width: 1px 0 0 1px; transform: rotate(45deg); }
.chev.down { transform: rotate(225deg); }
.chev.left { transform: rotate(-45deg); }
.chev.right { transform: rotate(135deg); }

/* Title bar */
.titlebar { display: flex; align-items: center; height: 15px; background: #cdcdcd; }
.quick { display: flex; align-items: center; gap: 1px; width: 325px; padding-left: 2px; }
.quick button { width: 12px; height: 13px; }
.quick .app { width: 11px; background: #1565b5; color: #fff; font-size: 8px; font-weight: 700; }
.quick .on { width: 14px; background: #9fcdf2; outline: 1px solid #69a5d8; }
.quick .letter { font-size: 10px; font-weight: 700; }
.sep { width: 3px; }
.sep.far { width: 6px; }
.title { flex: 1; text-align: center; white-space: nowrap; }
.account { display: flex; align-items: center; gap: 3px; }
.account button { width: 12px; gap: 2px; }
.account .login { width: 27px; }
.store { display: flex; align-items: center; gap: 4px; margin: 0 4px 0 28px; }
.winctl { display: flex; gap: 3px; margin-left: 30px; padding-right: 1px; }
.winctl button { width: 12px; height: 12px; }
.winctl svg { width: 8px; height: 8px; }
.min { width: 5px; height: 1px; margin-top: 6px; background: #333; }

/* Ribbon tabs */
.tabs { display: flex; height: 13px; background: #cdcdcd; }
.tabs button { padding: 0 6px 0 5px; }
.tabs .file { width: 25px; margin-right: 2px; background: #1673c4; color: #fff; }
.tabs .current { background: #e4eed7; color: #222; }
.tabs .state { gap: 2px; }
.state i { width: 8px; height: 5px; border: 1px solid #555; border-radius: 2px; }

/* Ribbon */
.ribbon { display: flex; height: 54px; background: #e4eed7; border-bottom: 1px solid #d1dac8; }
.group { display: flex; flex-direction: column; background: #f3f3f2; }
.group h2 { display: flex; align-items: center; justify-content: center; gap: 3px; height: 11px; }
.body { flex: 1; display: flex; }
.split { gap: 3px; }
.stack { flex-direction: column; align-items: center; }
.stack button { height: 21px; }
.big { width: 17px; height: 17px; }
.cur { width: 9px; height: 17px; }
.tool { flex-direction: column; justify-content: flex-start; gap: 1px; width: 100%; padding-top: 3px; }
.tool span { display: block; margin-top: 1px; height: 8px; line-height: 9px; }
.dim { color: #b3b3b3; }
.hot { background: #b9d9f2; outline: 1px solid #8dbde3; outline-offset: -1px; }
.rows, .pairs { display: grid; grid-template-rows: repeat(3, 13px); align-content: center; }
.rows button { gap: 2px; justify-content: flex-start; }
.named { width: 57px; color: #444; }
.named .caret { margin-left: 4px; }
.pairs { grid-template-columns: repeat(2, 14px); }
.pairs.three { grid-template-columns: repeat(3, 14px); }
.pairs.wide { grid-template-columns: 20px 14px; }
.pairs .drop { width: 20px; padding-left: 2px; gap: 1px; }
.bigs { display: grid; grid-template-columns: repeat(4, 22px); grid-template-rows: repeat(2, 21px); }
.bigs.two { grid-template-columns: repeat(2, 20px); }

.p-select { width: 28px; }
.p-props { width: 26px; }
.p-props .stack button { width: 22px; }
.p-clip { width: 42px; }
.p-clip .body { padding-left: 4px; }
.p-clip .tool { width: 20px; }
.p-clip .rows { margin-left: 3px; }
.p-geo { width: 96px; }
.p-geo .body { padding-left: 4px; gap: 0; }
.p-ctl { width: 24px; }
.p-mod { width: 134px; }
.p-view { width: 38px; }
.p-view .body { padding-left: 2px; }
.p-meas { width: 32px; }
.p-make { width: 43px; }
.p-make .body { padding-left: 1px; }
.p-place { width: 85px; background: #e4eed7; }
.p-place .body { margin-left: 3px; gap: 0; background: #f3f3f2; }
.p-place .tool { width: 22px; }
.p-place .tool.last { width: 36px; margin-left: 2px; border-left: 1px solid #d5d5d5; }

.brand { display: flex; flex-direction: column; width: 166px; margin-left: auto; margin-right: 11px; }
.brand-top { display: flex; align-items: center; gap: 8px; height: 40px; border-bottom: 2px solid #5aa2cb; padding-left: 1px; }
.brand-mark { width: 30px; height: 36px; }
.brand strong { color: #2c90cc; font-size: 30px; line-height: 36px; white-space: nowrap; }
.brand p { margin-top: 3px; color: #222; text-align: center; white-space: nowrap; }

.options { height: 15px; padding: 3px 5px; background: #e4eed7; color: #adb3a5; }

/* Work area */
.work { flex: 1; display: grid; grid-template-columns: 145px minmax(0, 1fr) 139px; border-bottom: 1px solid #d0d0d0; }
.panelhead { display: flex; align-items: center; justify-content: space-between; height: 12px; padding: 0 2px; background: #efefef; }
.panelhead svg { width: 7px; height: 7px; }

.properties { display: flex; flex-direction: column; background: #f2f2f2; border-right: 1px solid #d0d0d0; }
.type { display: flex; align-items: center; gap: 3px; height: 41px; padding: 0 2px; }
.thumb { display: grid; place-items: center; width: 37px; height: 37px; border: 1px solid #e0e0e0; background: #fafafa; }
.thumb svg { width: 18px; height: 18px; }
.names { flex: 1; }
.instance { display: grid; grid-template-columns: 96px 1fr; height: 14px; }
.instance select, .status select {
  background: #cdcdcd url("data:image/svg+xml,%3Csvg xmlns='http://www.w3.org/2000/svg' width='5' height='4'%3E%3Cpath d='M0.500 0.500l2 2 2-2' fill='none' stroke='%23888'/%3E%3C/svg%3E") no-repeat right 2px center;
}
.instance select { padding: 0 2px; color: #777; }
.instance button { gap: 3px; color: #999; }
.tablewrap { flex: 1; display: flex; align-items: flex-start; }
table { width: 133px; height: 383px; border-collapse: collapse; table-layout: fixed; }
.c1 { width: 63px; }
.c2 { width: 64px; }
.c3 { width: 6px; }
th, td { padding: 0 1px; border: 1px dashed #c4c4c4; border-width: 0 1px 1px 0; font-weight: 400; line-height: 9px; text-align: left; white-space: nowrap; }
th { padding-left: 6px; }
.cat { background: #dddddd; }
.cat th { padding-left: 2px; border-right: 0; color: #111; font-weight: 500; }
.cat td { padding: 0; }
.off { color: #8a8a8a; }
.in { padding-left: 3px; }
td.act { padding: 0; background: #cecece; }
.act button { width: 100%; height: 9px; color: #999; }
.vscroll { display: flex; flex-direction: column; align-items: center; gap: 3px; align-self: stretch; width: 10px; margin-left: 1px; padding: 4px 0; background: #f0f0f0; }
.vscroll .bar { width: 8px; height: 355px; background: #cdcdcd; }
.vscroll .down { margin-top: auto; }
.properties footer { display: flex; align-items: center; justify-content: space-between; height: 15px; padding: 0 2px; }
.properties a { background: #cfe6f6; color: #1768ad; }
.properties footer button { width: 41px; height: 11px; background: #cbcbcb; color: #9a9a9a; }

/* Drawing view */
.viewer { display: flex; flex-direction: column; min-width: 0; border-right: 2px solid #d4d4d4; }
.doctabs { display: flex; align-items: center; height: 12px; background: #cdcdcd; }
.doctabs button { justify-content: flex-start; gap: 4px; width: 72px; height: 12px; padding: 0 3px; }
.doctabs svg { width: 9px; height: 9px; }
.doctabs .current { background: #fff; }
.doctabs .close { width: 7px; height: 7px; margin-left: auto; }
.doctabs .caret { margin-left: auto; margin-right: 3px; }
.stage { position: relative; flex: 1; display: flex; }
.drawing { flex: 1; width: 100%; min-width: 0; height: 100%; }
.leveltext { font: 9px "Liberation Sans", "Noto Sans CJK SC", sans-serif; fill: #222; }
.leveltext .name { font-size: 10px; }
.view { width: 10px; margin: 0; }
.view .bar { height: 9px; margin: auto 0; }
.view .down { margin: 0; }
.navbar { position: absolute; top: 1px; right: 11px; display: flex; flex-direction: column; align-items: center; gap: 3px; width: 19px; height: 66px; padding: 1px; border: 1px solid #d4d4d4; border-radius: 3px; background: #f3f3f3; }
.navbar svg { width: 14px; height: 14px; }
.navbar hr { width: 14px; margin: 0; border: 0; border-top: 1px solid #ddd; }
.navbar .caret { border-top-color: #aaa; }
.dot { flex: none; width: 4px; height: 4px; align-self: flex-end; border: 1px solid #aaa; border-radius: 50%; }
.dot.end { margin-top: auto; }
.viewbar { display: flex; align-items: center; height: 13px; padding: 0 8px 0 12px; background: #f1f1f1; }
.viewbar button { width: 12px; }
.viewbar .ratio { width: 27px; margin-right: 5px; }
.viewbar .left { margin-left: 3px; }
.hscroll { flex: 1; display: flex; justify-content: center; }
.hscroll span { width: 9px; height: 9px; background: #cdcdcd; }

/* Project browser */
.browser { background: #fff; }
.tree { display: flex; flex-direction: column; height: 225px; }
.tree li { position: relative; flex: 1; display: flex; align-items: center; gap: 3px; padding-left: 3px; white-space: nowrap; }
.tree li::before { content: ""; position: absolute; left: 5px; top: 0; bottom: 0; border-left: 1px dotted #bbb; }
.tree .l1 { padding-left: 14px; }
.tree .l1 .exp { margin-right: 5px; }
.tree .l2 { padding-left: 34px; }
.tree .l1::after, .tree .l2::after { content: ""; position: absolute; left: 16px; top: 0; bottom: 0; border-left: 1px dotted #bbb; }
.tree svg { width: 9px; height: 9px; }
.exp { z-index: 1; display: grid; place-items: center; width: 5px; height: 5px; border: 1px solid #aaa; background: #fff; font-size: 6px; font-style: normal; line-height: 4px; }
.exp.none { visibility: hidden; }
.box { width: 9px; height: 9px; border: 1px solid #888; background: #fff; }
.sel { padding: 0 1px; background: #dcdcdc; }

/* Status bar */
.status { display: flex; align-items: center; height: 11px; background: #cbcbcb; }
.ready { width: 529px; padding-left: 1px; }
.status .ws { width: 16px; background: #dadada; }
.status select { width: 114px; height: 11px; padding: 0 2px; background-color: #fff; color: #777; }
.status button { width: 13px; }
.status .req { width: 24px; margin-right: 9px; }
.status select + .req { margin-left: 2px; }
.status .ws + select { margin-left: 0; }
.picks { display: flex; gap: 2px; margin-left: auto; padding-right: 29px; }
.status .picks .req { margin: 0; width: 20px; }

/* Input method toolbar */
.ime { position: absolute; right: 0; top: 467px; display: flex; align-items: center; gap: 5px; height: 19px; padding-right: 2px; background: linear-gradient(#eef6fc, #eef6fc) right center / 82px 15px no-repeat; color: #1d6db0; font-size: 9px; font-weight: 700; }
.ime svg { width: 9px; height: 9px; }
.ime .sogou { width: 19px; height: 19px; }
```
